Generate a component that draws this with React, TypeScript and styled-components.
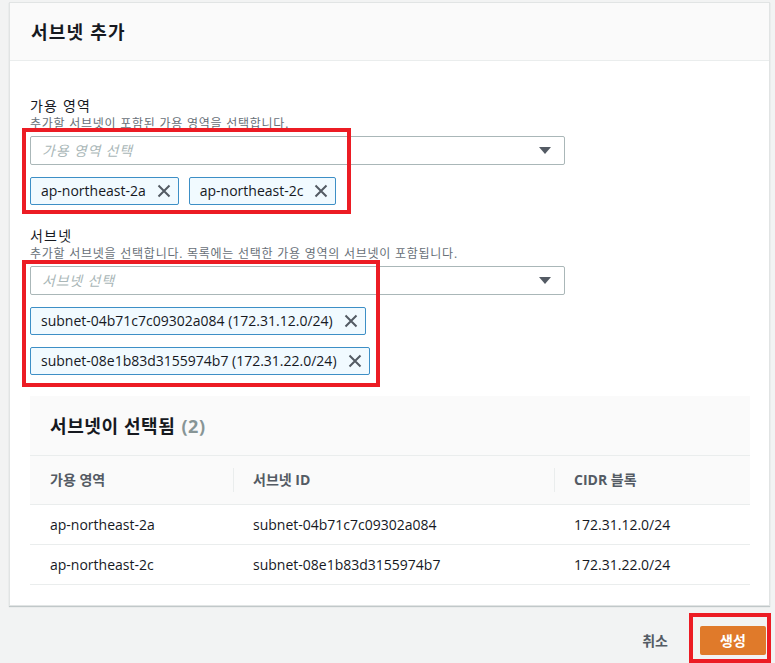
import styled, { createGlobalStyle } from "styled-components";

const GlobalStyle = createGlobalStyle`
  html, body {
    margin: 0;
    padding: 0;
    background-color: #f2f3f3;
    font-family: "Open Sans", "Noto Sans CJK KR", sans-serif;
    color: #16191f;
    overflow: hidden;
  }
  * {
    box-sizing: border-box;
  }
`;

type Row = {
  zone: string;
  subnetId: string;
  cidr: string;
};

const rows: Row[] = [
  { zone: "ap-northeast-2a", subnetId: "subnet-04b71c7c09302a084", cidr: "172.31.12.0/24" },
  { zone: "ap-northeast-2c", subnetId: "subnet-08e1b83d3155974b7", cidr: "172.31.22.0/24" },
];

function CloseIcon() {
  return (
    <svg width="16" height="16" viewBox="0 0 16 16">
      <path d="M2.5 2.5 L13.5 13.5 M13.5 2.5 L2.5 13.5" stroke="#545b64" strokeWidth="2" fill="none" />
    </svg>
  );
}

function Caret() {
  return (
    <svg width="12" height="8" viewBox="0 0 12 8">
      <polygon points="0,0 12,0 6,7" fill="#545b64" />
    </svg>
  );
}

function App() {
  return (
    <Page>
      <GlobalStyle />
      <Card>
        <CardHeader>
          <h2 className="title">서브넷 추가</h2>
        </CardHeader>
        <CardBody>
          <Field>
            <Label>가용 영역</Label>
            <Description>추가할 서브넷이 포함된 가용 영역을 선택합니다.</Description>
            <Select>
              <span className="placeholder">가용 영역 선택</span>
              <Caret />
            </Select>
            <TokenList>
              <Token>
                <span>ap-northeast-2a</span>
                <CloseIcon />
              </Token>
              <Token>
                <span>ap-northeast-2c</span>
                <CloseIcon />
              </Token>
            </TokenList>
          </Field>

          <Field $gap={22}>
            <Label>서브넷</Label>
            <Description>
              추가할 서브넷을 선택합니다. 목록에는 선택한 가용 영역의 서브넷이 포함됩니다.
            </Description>
            <Select>
              <span className="placeholder">서브넷 선택</span>
              <Caret />
            </Select>
            <TokenList>
              {rows.map((row) => (
                <Token key={row.subnetId}>
                  <span>
                    {row.subnetId} ({row.cidr})
                  </span>
                  <CloseIcon />
                </Token>
              ))}
            </TokenList>
          </Field>

          <Table>
            <TableTitle>
              서브넷이 선택됨 <span className="count">(2)</span>
            </TableTitle>
            <Grid>
              <HeadCell>가용 영역</HeadCell>
              <HeadCell $divider>서브넷 ID</HeadCell>
              <HeadCell $divider>CIDR 블록</HeadCell>
              {rows.map((row) => (
                <RowCells key={row.subnetId}>
                  <Cell>{row.zone}</Cell>
                  <Cell>{row.subnetId}</Cell>
                  <Cell>{row.cidr}</Cell>
                </RowCells>
              ))}
            </Grid>
          </Table>
        </CardBody>
      </Card>

      <Footer>
        <CancelButton>취소</CancelButton>
        <PrimaryButton>생성</PrimaryButton>
      </Footer>

      <Highlight $left={22} $top={128} $width={329} $height={86} />
      <Highlight $left={22} $top={260} $width={358} $height={127} />
      <Highlight $left={689} $top={613} $width={82} $height={50} />
    </Page>
  );
}

export default App;

const Page = styled.div`
  position: relative;
  width: 775px;
  height: 663px;
  padding: 2px 5px 0 9px;
`;

const Card = styled.div`
  background-color: white;
  border: 1px solid #e1e4e4;
  box-shadow: 0 1px 1px rgba(0, 28, 36, 0.2);
`;

const CardHeader = styled.div`
  height: 58px;
  display: flex;
  align-items: center;
  padding: 0 21px;
  background-color: #fafafa;
  border-bottom: 1px solid #eaeded;

  .title {
    margin: 0;
    font-size: 18px;
    line-height: 22px;
    font-weight: bold;
    letter-spacing: 1.2px;
    color: #16191f;
  }
`;

const CardBody = styled.div`
  padding: 36px 20px 20px 20px;
`;

const Field = styled.div<{ $gap?: number }>`
  display: flex;
  flex-direction: column;
  margin-top: ${(props) => props.$gap ?? 0}px;
`;

const Label = styled.div`
  font-size: 14px;
  line-height: 18px;
  letter-spacing: 1.2px;
  color: #16191f;
`;

const Description = styled.div`
  font-size: 12px;
  line-height: 17px;
  letter-spacing: 0.75px;
  color: #687078;
`;

const Select = styled.div`
  margin-top: 4px;
  width: 535px;
  height: 29px;
  border: 1px solid #aab7b8;
  border-radius: 2px;
  display: flex;
  align-items: center;
  justify-content: space-between;
  padding: 0 13px 0 11px;

  .placeholder {
    font-size: 14px;
    font-style: italic;
    letter-spacing: 0.8px;
    color: #aab7b8;
    line-height: 18px;
  }
`;

const TokenList = styled.div`
  margin-top: 12px;
  display: flex;
  flex-wrap: wrap;
  row-gap: 12px;
  column-gap: 10px;
  width: 535px;
`;

const Token = styled.div`
  height: 28px;
  display: flex;
  align-items: center;
  gap: 10px;
  padding: 0 6px 0 10px;
  background-color: #f1faff;
  border: 1px solid #3d8fc6;
  border-radius: 2px;
  font-size: 14px;
  line-height: 18px;
  color: #16191f;

  svg {
    flex-shrink: 0;
  }
`;

const Table = styled.div`
  margin-top: 21px;
  width: 720px;
`;

const TableTitle = styled.div`
  height: 60px;
  display: flex;
  align-items: center;
  gap: 6px;
  padding: 0 20px;
  background-color: #fafafa;
  border-bottom: 1px solid #eaeded;
  font-size: 18px;
  line-height: 22px;
  font-weight: bold;
  letter-spacing: 0.6px;
  color: #16191f;

  .count {
    color: #879596;
    font-weight: bold;
  }
`;

const Grid = styled.div`
  display: grid;
  grid-template-columns: 203px 321px 1fr;
`;

const HeadCell = styled.div<{ $divider?: boolean }>`
  position: relative;
  height: 49px;
  display: flex;
  align-items: center;
  padding-left: 20px;
  background-color: #fafafa;
  border-bottom: 1px solid #eaeded;
  font-size: 14px;
  line-height: 18px;
  font-weight: bold;
  color: #545b64;

  &::before {
    content: "";
    display: ${(props) => (props.$divider ? "block" : "none")};
    position: absolute;
    left: 0;
    top: 12px;
    height: 24px;
    border-left: 1px solid #eaeded;
  }
`;

const RowCells = styled.div`
  display: contents;
`;

const Cell = styled.div`
  height: 40px;
  display: flex;
  align-items: center;
  padding-left: 20px;
  border-bottom: 1px solid #eaeded;
  font-size: 14px;
  line-height: 18px;
  color: #16191f;
`;

const Footer = styled.div`
  display: flex;
  justify-content: flex-end;
  align-items: center;
  gap: 32px;
  padding: 20px 4px 0 0;
`;

const CancelButton = styled.button`
  border: none;
  background: none;
  padding: 0;
  font-family: inherit;
  font-size: 14px;
  line-height: 18px;
  font-weight: bold;
  color: #545b64;
`;

const PrimaryButton = styled.button`
  height: 29px;
  width: 66px;
  border: none;
  border-radius: 2px;
  background-color: #e07a2a;
  font-family: inherit;
  font-size: 14px;
  line-height: 18px;
  font-weight: bold;
  color: white;
`;

const Highlight = styled.div<{ $left: number; $top: number; $width: number; $height: number }>`
  position: absolute;
  left: ${(props) => props.$left}px;
  top: ${(props) => props.$top}px;
  width: ${(props) => props.$width}px;
  height: ${(props) => props.$height}px;
  border: 4px solid #ec1c24;
  pointer-events: none;
`;
